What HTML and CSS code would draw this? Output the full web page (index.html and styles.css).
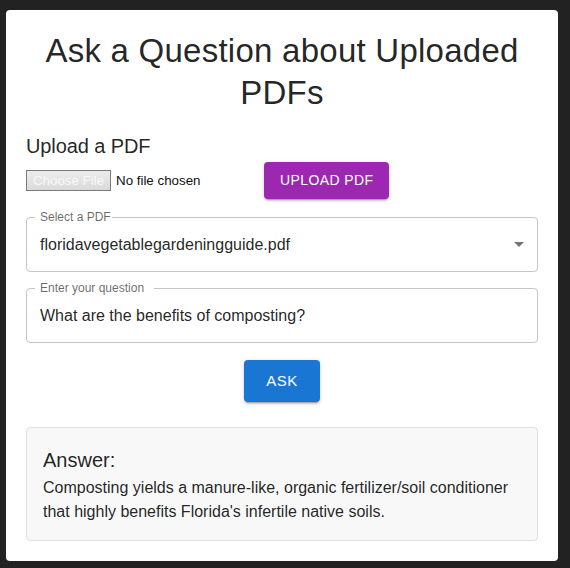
FILE: index.html
```html
<!DOCTYPE html>
<html lang="en">
<head>
<meta charset="utf-8">
<title>Ask a Question about Uploaded PDFs</title>
<link rel="stylesheet" href="styles.css">
</head>
<body>
<main class="card">
  <h1 class="title">Ask a Question about Uploaded PDFs</h1>
  <h2 class="subtitle">Upload a PDF</h2>
  <div class="upload-row">
    <div class="file-picker">
      <span class="file-btn">Choose File</span>
      <span class="file-name">No file chosen</span>
    </div>
    <button class="btn btn-purple" type="button">Upload PDF</button>
  </div>
  <div class="field field-select">
    <span class="field-label label-select">Select a PDF</span>
    <span class="field-value">floridavegetablegardeningguide.pdf</span>
    <svg class="arrow" viewBox="0 0 24 24" width="24" height="24" aria-hidden="true"><path d="M7 10l5 5 5-5z"/></svg>
  </div>
  <div class="field field-question">
    <span class="field-label label-question">Enter your question</span>
    <input class="field-input" type="text" value="What are the benefits of composting?">
  </div>
  <div class="ask-row">
    <button class="btn btn-blue" type="button">Ask</button>
  </div>
  <section class="answer">
    <h3 class="answer-title">Answer:</h3>
    <p class="answer-text">Composting yields a manure-like, organic fertilizer/soil conditioner that highly benefits Florida's infertile native soils.</p>
  </section>
</main>
</body>
</html>
```
FILE: styles.css
```css
html, body {
  margin: 0;
  background: #222222;
}
body {
  padding: 10px 12px 7px 6px;
  font-family: "Liberation Sans", Arial, sans-serif;
  color: rgba(0, 0, 0, 0.87);
}
.card {
  display: block;
  background: #ffffff;
  border-radius: 4px;
  padding: 20px;
}
.title {
  margin: 0;
  font-size: 33px;
  line-height: 42px;
  font-weight: 400;
  letter-spacing: 0.25px;
  text-align: center;
}
.subtitle {
  margin: 16px 0 0;
  font-size: 20px;
  line-height: 32px;
  font-weight: 400;
  letter-spacing: -0.1px;
}
.upload-row {
  display: flex;
  align-items: center;
  gap: 8px;
}
.file-picker {
  width: 230px;
  display: flex;
  align-items: center;
  gap: 5px;
  font-size: 13.33px;
}
.file-btn {
  box-sizing: border-box;
  height: 21px;
  width: 85px;
  display: flex;
  align-items: center;
  justify-content: center;
  border: 1px solid #7a7a7a;
  background: linear-gradient(#ececec, #dadada);
  color: #f8f8f8;
  font-size: 13.33px;
}
.file-name {
  color: #111;
}
.btn {
  border: 0;
  border-radius: 4px;
  color: #ffffff;
  font-family: inherit;
  font-weight: 400;
  text-transform: uppercase;
  cursor: pointer;
  box-shadow: 0 3px 1px -2px rgba(0,0,0,0.2), 0 2px 2px 0 rgba(0,0,0,0.14), 0 1px 5px 0 rgba(0,0,0,0.12);
}
.btn-purple {
  background: #9c27b0;
  font-size: 14px;
  line-height: 24.5px;
  letter-spacing: 0.4px;
  padding: 6px 16px;
}
.btn-blue {
  background: #1976d2;
  font-size: 15px;
  line-height: 26.25px;
  letter-spacing: 0.43px;
  padding: 8px 22px;
}
.field {
  position: relative;
  box-sizing: border-box;
  height: 55px;
  border: 1px solid #c4c4c4;
  border-radius: 4px;
  display: flex;
  align-items: center;
  padding: 0 6px 0 13px;
  font-size: 16px;
}
.field-select {
  margin-top: 18px;
}
.field-question {
  margin-top: 16px;
}
.field-label {
  position: absolute;
  top: -7px;
  left: 8px;
  font-size: 12px;
  line-height: 12px;
  color: rgba(0, 0, 0, 0.6);
  background: #ffffff;
}
.label-select {
  padding: 0 1px 0 5px;
}
.label-question {
  padding: 0 10px 0 5px;
}
.field-value {
  flex: 1;
  line-height: 23px;
}
.arrow {
  fill: rgba(0, 0, 0, 0.54);
  flex: none;
}
.field-input {
  flex: 1;
  border: 0;
  outline: none;
  background: transparent;
  padding: 0;
  font-family: inherit;
  font-size: 16px;
  line-height: 23px;
  color: rgba(0, 0, 0, 0.87);
}
.ask-row {
  display: flex;
  justify-content: center;
  margin-top: 17px;
}
.answer {
  margin-top: 25px;
  border: 1px solid #e0e0e0;
  border-radius: 4px;
  background: #f8f8f8;
  padding: 16px;
}
.answer-title {
  margin: 0;
  font-size: 20px;
  line-height: 32px;
  font-weight: 400;
}
.answer-text {
  margin: 0;
  font-size: 16px;
  line-height: 24px;
}
```
